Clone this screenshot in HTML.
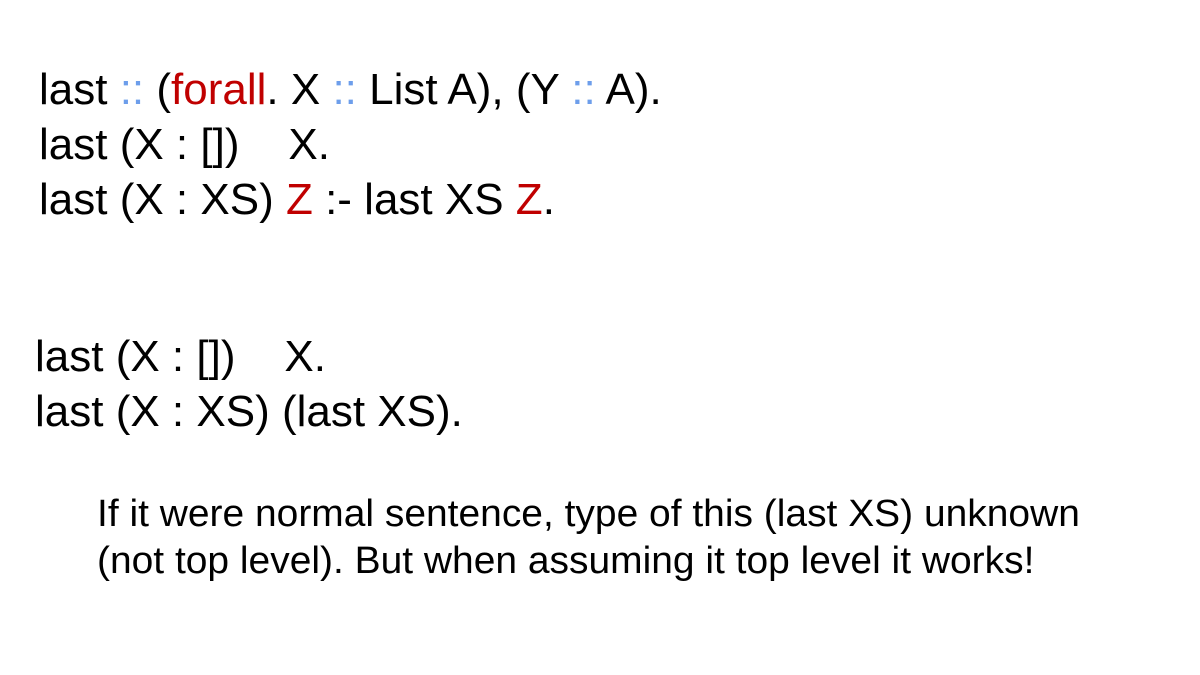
<!DOCTYPE html>
<html><head><meta charset="utf-8"><style>
html,body{margin:0;padding:0;background:#fff;}
body{width:1200px;height:675px;position:relative;overflow:hidden;font-family:"Liberation Sans",sans-serif;color:#000;}
.l{position:absolute;white-space:pre;font-size:44px;line-height:55px;}
.p{position:absolute;white-space:pre;font-size:38px;line-height:47px;transform:scaleX(1.025);transform-origin:left center;}
.r{color:#c00000}.b{color:#6d9eeb}
</style></head><body>
<div class="l" style="left:39px;top:62px">last <span class="b">::</span> (<span class="r">forall</span>. X <span class="b">::</span> List A), (Y <span class="b">::</span> A).</div>
<div class="l" style="left:39px;top:117px">last (X : [])    X.</div>
<div class="l" style="left:39px;top:172px">last (X : XS) <span class="r">Z</span> :- last XS <span class="r">Z</span>.</div>
<div class="l" style="left:35px;top:329px">last (X : [])    X.</div>
<div class="l" style="left:35px;top:384px">last (X : XS) (last XS).</div>
<div class="p" style="left:97px;top:491px">If it were normal sentence, type of this (last XS) unknown</div>
<div class="p" style="left:97px;top:538px">(not top level). But when assuming it top level it works!</div>
</body></html>
